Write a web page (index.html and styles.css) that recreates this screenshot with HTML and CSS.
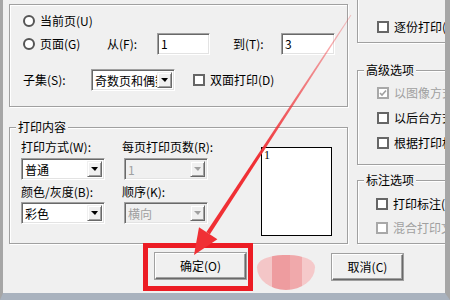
FILE: index.html
```html
<!DOCTYPE html>
<html lang="zh-CN">
<head>
  <meta charset="UTF-8" />
  <title>打印</title>
  <link rel="stylesheet" href="styles.css">
</head>
<body>

  <div class="window">
    <div class="main">

      <div class="left-col">
        <!-- page range -->
        <div class="group range-group">
          <div class="range-row first">
            <span class="radio"></span><span>当前页(U)</span>
          </div>
          <div class="range-row">
            <span class="range-choice"><span class="radio"></span><span>页面(G)</span></span>
            <span class="range-label">从(F):</span>
            <span class="textbox from-box">1</span>
            <span class="range-label to-label">到(T):</span>
            <span class="textbox to-box">3</span>
          </div>
          <div class="range-row subset-row">
            <span class="subset-label">子集(S):</span>
            <span class="select subset-select">
              <span class="select-value">奇数页和偶数页</span>
              <span class="select-btn"><span class="arrow"></span></span>
            </span>
            <span class="check duplex"><span class="box"></span><span>双面打印(D)</span></span>
          </div>
        </div>

        <!-- print content -->
        <div class="group print-group">
          <span class="group-title">打印内容</span>
          <div class="print-body">
            <div class="print-grid">
              <span class="field-label">打印方式(W):</span>
              <span class="field-label col2">每页打印页数(R):</span>
              <span class="select">
                <span class="select-value">普通</span>
                <span class="select-btn"><span class="arrow"></span></span>
              </span>
              <span class="select disabled col2">
                <span class="select-value">1</span>
                <span class="select-btn"><span class="arrow"></span></span>
              </span>
              <span class="field-label second">颜色/灰度(B):</span>
              <span class="field-label col2 second">顺序(K):</span>
              <span class="select">
                <span class="select-value">彩色</span>
                <span class="select-btn"><span class="arrow"></span></span>
              </span>
              <span class="select disabled col2">
                <span class="select-value">横向</span>
                <span class="select-btn"><span class="arrow"></span></span>
              </span>
            </div>
            <div class="preview">1</div>
          </div>
        </div>
      </div>

      <div class="right-col">
        <div class="group copies-group">
          <span class="check"><span class="box"></span><span>逐份打印(T)</span></span>
        </div>

        <div class="group advanced-group">
          <span class="group-title">高级选项</span>
          <span class="check disabled">
            <span class="box">
              <svg width="8" height="8" viewBox="0 0 8 8"><polyline points="1,4 3,6 7,1.5" fill="none" stroke="#a0a0a0" stroke-width="1.6"/></svg>
            </span>
            <span>以图像方式打印</span>
          </span>
          <span class="check"><span class="box"></span><span>以后台方式打印</span></span>
          <span class="check"><span class="box"></span><span>根据打印机设置</span></span>
        </div>

        <div class="group note-group">
          <span class="group-title">标注选项</span>
          <span class="check"><span class="box"></span><span>打印标注(M)</span></span>
          <span class="check disabled"><span class="box"></span><span>混合打印文档</span></span>
        </div>
      </div>

    </div>

    <div class="buttons">
      <button class="btn ok-btn">确定(O)</button>
      <div class="blob"></div>
      <button class="btn cancel-btn">取消(C)</button>
    </div>

    <!-- annotation drawn over the dialog -->
    <div class="mark-box"></div>
    <svg class="mark-arrow" width="450" height="300" viewBox="0 0 450 300">
      <defs>
        <linearGradient id="fade" x1="0" y1="15" x2="0" y2="160" gradientUnits="userSpaceOnUse">
          <stop offset="0" stop-color="#f03035" stop-opacity="0.25"/>
          <stop offset="1" stop-color="#f03035" stop-opacity="1"/>
        </linearGradient>
      </defs>
      <polygon points="350.6,14.7 351.4,15.3 209.8,234.4 206.4,232.0" fill="url(#fade)"/>
      <polygon points="194,255 217.4,239.2 199,227.2" fill="#f03035"/>
    </svg>
  </div>

</body>
</html>
```

FILE: styles.css
```css
body {
  margin: 0;
  background: #f0f0f0;
  font-family: "Noto Sans CJK SC", "Liberation Sans", sans-serif;
  font-size: 12px;
  line-height: 14px;
  color: #000;
}

.window {
  position: relative;
  width: 450px;
  height: 300px;
  box-sizing: border-box;
  border-left: 3px solid #a6a6a6;
  border-right: 5px solid #a6a6a6;
  border-bottom: 7px solid #a9b2be;
  overflow: hidden;
}

.main {
  display: flex;
  gap: 9px;
  padding-left: 6px;
}

.left-col {
  flex: none;
  width: 339px;
  padding-top: 4px;
}

.right-col {
  flex: none;
  width: 110px;
}

.group {
  position: relative;
  box-sizing: border-box;
  border: 1px solid #a0a0a0;
  box-shadow: inset 1px 1px 0 #fff, 1px 1px 0 #fff;
}

.group-title {
  position: absolute;
  top: -8px;
  left: 6px;
  padding: 0 2px;
  background: #f0f0f0;
}

/* page range */
.range-group {
  height: 103px;
  padding: 5px 0 0 13px;
}

.range-row {
  display: flex;
  align-items: center;
  height: 22px;
  margin-top: 1px;
}

.range-row.first {
  margin-top: 0;
}

.range-row.subset-row {
  margin-top: 14px;
}

.radio {
  width: 8px;
  height: 8px;
  border: 2px solid #555;
  border-radius: 50%;
  background: #fff;
  margin-right: 5px;
  flex: none;
}

.range-choice {
  display: flex;
  align-items: center;
  width: 84px;
}

.range-label {
  width: 50px;
}

.to-label {
  width: 48px;
  margin-left: 23px;
}

.textbox {
  box-sizing: border-box;
  height: 22px;
  padding: 3px 0 0 3px;
  background: #fff;
  border: 1px solid;
  border-color: #a0a0a0 #fff #fff #a0a0a0;
  box-shadow: inset 1px 1px 0 #696969, inset -1px -1px 0 #e3e3e3;
}

.from-box {
  width: 53px;
}

.to-box {
  width: 54px;
}

.subset-label {
  width: 68px;
}

.subset-select {
  width: 84px;
}

.duplex {
  margin-left: 18px;
}

/* select */
.select {
  display: flex;
  box-sizing: border-box;
  width: 84px;
  height: 22px;
  padding: 2px;
  background: #fff;
  border: 1px solid;
  border-color: #a0a0a0 #fff #fff #a0a0a0;
  box-shadow: inset 1px 1px 0 #696969, inset -1px -1px 0 #e3e3e3;
}

.select-value {
  flex: 1;
  padding: 2px 0 0 1px;
  overflow: hidden;
  white-space: nowrap;
}

.select-btn {
  display: flex;
  align-items: center;
  justify-content: center;
  box-sizing: border-box;
  flex: none;
  width: 15px;
  background: #f0f0f0;
  border: 1px solid;
  border-color: #f0f0f0 #696969 #696969 #f0f0f0;
  box-shadow: inset 1px 1px 0 #fff, inset -1px -1px 0 #a0a0a0;
}

.arrow {
  width: 0;
  height: 0;
  border-top: 4px solid #000;
  border-left: 4px solid transparent;
  border-right: 3px solid transparent;
}

.select.disabled {
  background: #f0f0f0;
  color: #a0a0a0;
}

.select.disabled .arrow {
  border-top-color: #a0a0a0;
}

/* print content */
.print-group {
  height: 117px;
  margin-top: 20px;
  padding: 12px 0 0 11px;
}

.print-body {
  display: flex;
}

.print-grid {
  display: grid;
  grid-template-columns: 101px 84px;
  align-content: start;
}

.field-label {
  margin-bottom: 4px;
  white-space: nowrap;
}

.field-label.second {
  margin-top: 5px;
  margin-bottom: 3px;
}

.select.col2 {
  margin-left: 2px;
}

.preview {
  box-sizing: border-box;
  width: 71px;
  height: 89px;
  margin: 7px 0 0 55px;
  padding: 1px 0 0 2px;
  background: #fff;
  border: 1px solid #000;
  font-family: "Liberation Serif", serif;
  font-size: 12px;
  line-height: 12px;
}

/* checkboxes */
.check {
  display: flex;
  align-items: center;
  height: 14px;
  white-space: nowrap;
}

.check .box {
  display: flex;
  align-items: center;
  justify-content: center;
  flex: none;
  width: 8px;
  height: 8px;
  border: 2px solid #666;
  background: #fff;
  margin-right: 5px;
}

.check.disabled {
  color: #a0a0a0;
}

.check.disabled .box {
  border-color: #a8a8a8;
}

/* right column groups */
.copies-group {
  height: 53px;
  margin-top: -10px;
  padding: 29px 0 0 19px;
}

.advanced-group {
  display: flex;
  flex-direction: column;
  gap: 11px;
  height: 95px;
  margin-top: 27px;
  padding: 15px 0 0 19px;
}

.note-group {
  display: flex;
  flex-direction: column;
  gap: 10px;
  height: 64px;
  margin-top: 15px;
  padding: 16px 0 0 18px;
}

/* buttons */
.buttons {
  display: flex;
  align-items: flex-start;
  margin-top: 9px;
  padding-left: 152px;
}

.btn {
  height: 26px;
  padding: 0;
  font: inherit;
  color: #000;
  background: #f0f0f0;
  border: 1px solid;
  border-color: #fff #696969 #696969 #fff;
  box-shadow: inset -1px -1px 0 #a0a0a0, 0 0 0 1px #a0a0a0;
}

.ok-btn {
  width: 91px;
}

.cancel-btn {
  width: 71px;
  margin-left: 17px;
  margin-top: 1px;
}

.blob {
  width: 58px;
  height: 35px;
  margin: 2px 0 0 11px;
  border-radius: 45% 45% 50% 50% / 35% 35% 65% 65%;
  background: linear-gradient(to right, #f4c6c7 0 15px, #ee9c9f 15px 33px, #f0a9ab 33px 45px, #f5c9ca 45px);
}

/* annotation */
.mark-box {
  position: absolute;
  left: 140px;
  top: 243px;
  width: 100px;
  height: 38px;
  border: 5px solid #ec1c24;
}

.mark-arrow {
  position: absolute;
  left: -3px;
  top: 0;
  pointer-events: none;
}
```
